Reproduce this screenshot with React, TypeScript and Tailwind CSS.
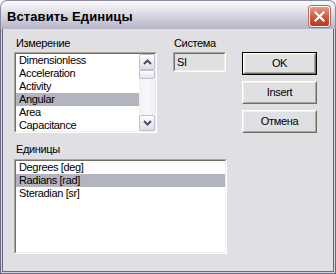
import React from "react";

const FONT = "font-['Liberation_Sans',Arial,sans-serif]";

function Sunken({ className, children }: { className?: string; children: React.ReactNode }) {
  return (
    <div className={`border border-t-[#aca899] border-l-[#aca899] border-b-white border-r-white ${className ?? ""}`}>
      <div className="h-full w-full border border-t-[#716f64] border-l-[#716f64] border-b-[#f1efe2] border-r-[#f1efe2] overflow-hidden">
        {children}
      </div>
    </div>
  );
}

function ListRow({ label, selected }: { label: string; selected?: boolean }) {
  return (
    <div className={`h-[13px] leading-[13px] pl-[3px] whitespace-nowrap ${selected ? "bg-[#b2b4bf]" : ""}`}>
      {label}
    </div>
  );
}

function Chevron({ up }: { up?: boolean }) {
  return (
    <svg width="9" height="6" viewBox="0 0 9 6">
      <polyline
        points={up ? "1,5 4.5,1.5 8,5" : "1,1 4.5,4.5 8,1"}
        fill="none"
        stroke="#4d4d6d"
        strokeWidth="2"
      />
    </svg>
  );
}

function ScrollButton({ up }: { up?: boolean }) {
  return (
    <div className="h-[16px] rounded-[2px] border border-[#c0bfd0] bg-gradient-to-b from-white to-[#dcdce6] flex items-center justify-center">
      <Chevron up={up} />
    </div>
  );
}

function Button({ label, isDefault }: { label: string; isDefault?: boolean }) {
  const face = (
    <div className="h-full border border-t-white border-l-white border-b-[#716f64] border-r-[#716f64]">
      <div className="h-full border border-t-[#f1efe2] border-l-[#f1efe2] border-b-[#aca899] border-r-[#aca899] flex items-center justify-center bg-[#e0dfe3]">
        {label}
      </div>
    </div>
  );
  return (
    <div className={`w-[75px] h-[23px] ${isDefault ? "border border-black" : ""}`}>{face}</div>
  );
}

export default function App() {
  const dims = ["Dimensionless", "Acceleration", "Activity", "Angular", "Area", "Capacitance"];
  const units = ["Degrees [deg]", "Radians [rad]", "Steradian [sr]"];

  return (
    <div className={`w-[336px] h-[274px] flex flex-col bg-white text-[11px] text-black ${FONT}`}>
      {/* title bar */}
      <div className="h-[29px] rounded-t-[7px] border-x border-t border-[#8c8ba3] bg-gradient-to-b from-[#fbfbfd] via-[#d8d8e3] to-[#b4b4c7] flex items-center justify-between pl-[6px] pr-[4px]">
        <span className="text-[13px] font-bold tracking-[0.1px] pt-[3px]">Вставить Единицы</span>
        <div className="w-[21px] h-[21px] rounded-[3px] border border-white bg-gradient-to-b from-[#e89a84] via-[#d35a3f] to-[#b8371f] flex items-center justify-center shadow-[0_0_0_1px_#b06a62] mt-[2px] mr-[1px]">
          <svg width="11" height="11" viewBox="0 0 11 11">
            <path d="M1.5 1.5 L9.5 9.5 M9.5 1.5 L1.5 9.5" stroke="white" strokeWidth="2.2" strokeLinecap="square" />
          </svg>
        </div>
      </div>

      {/* window frame */}
      <div className="flex-1 flex flex-col border-x border-b border-[#6c6a85]">
        <div className="flex-1 flex flex-col border-x border-b border-[#d2d1dc]">
          <div className="flex-1 flex flex-col border-x border-b border-[#6c6a85] bg-[#e0dfe3] pl-[11px] pt-[8px] tracking-[-0.35px]">
            <div className="flex items-start">
              <div className="w-[143px]">
                <div className="h-[15px] leading-[13px] pl-[2px]">Измерение</div>
                <Sunken className="h-[81px] bg-white">
                  <div className="flex h-full">
                    <div className="flex-1">
                      {dims.map((d) => (
                        <ListRow key={d} label={d} selected={d === "Angular"} />
                      ))}
                    </div>
                    <div className="w-[16px] flex flex-col bg-gradient-to-r from-[#f0f0f4] via-[#fafafc] to-[#eeeef2]">
                      <ScrollButton up />
                      <div className="flex-1">
                        <div className="h-[9px] rounded-[2px] border border-[#c0bfd0] bg-gradient-to-b from-white to-[#e2e2ea]" />
                      </div>
                      <ScrollButton />
                    </div>
                  </div>
                </Sunken>
              </div>

              <div className="w-[53px] ml-[16px]">
                <div className="h-[15px] leading-[13px] pl-[1px]">Система</div>
                <Sunken className="h-[20px]">
                  <div className="h-full leading-[16px] pl-[2px]">SI</div>
                </Sunken>
              </div>

              <div className="ml-[16px] mt-[15px] flex flex-col gap-[6px]">
                <Button label="OK" isDefault />
                <Button label="Insert" />
                <Button label="Отмена" />
              </div>
            </div>

            <div className="mt-[10px] h-[16px] leading-[13px] pl-[2px]">Единицы</div>
            <Sunken className="w-[213px] h-[95px] bg-white">
              {units.map((u) => (
                <ListRow key={u} label={u} selected={u === "Radians [rad]"} />
              ))}
            </Sunken>
          </div>
        </div>
      </div>
    </div>
  );
}
